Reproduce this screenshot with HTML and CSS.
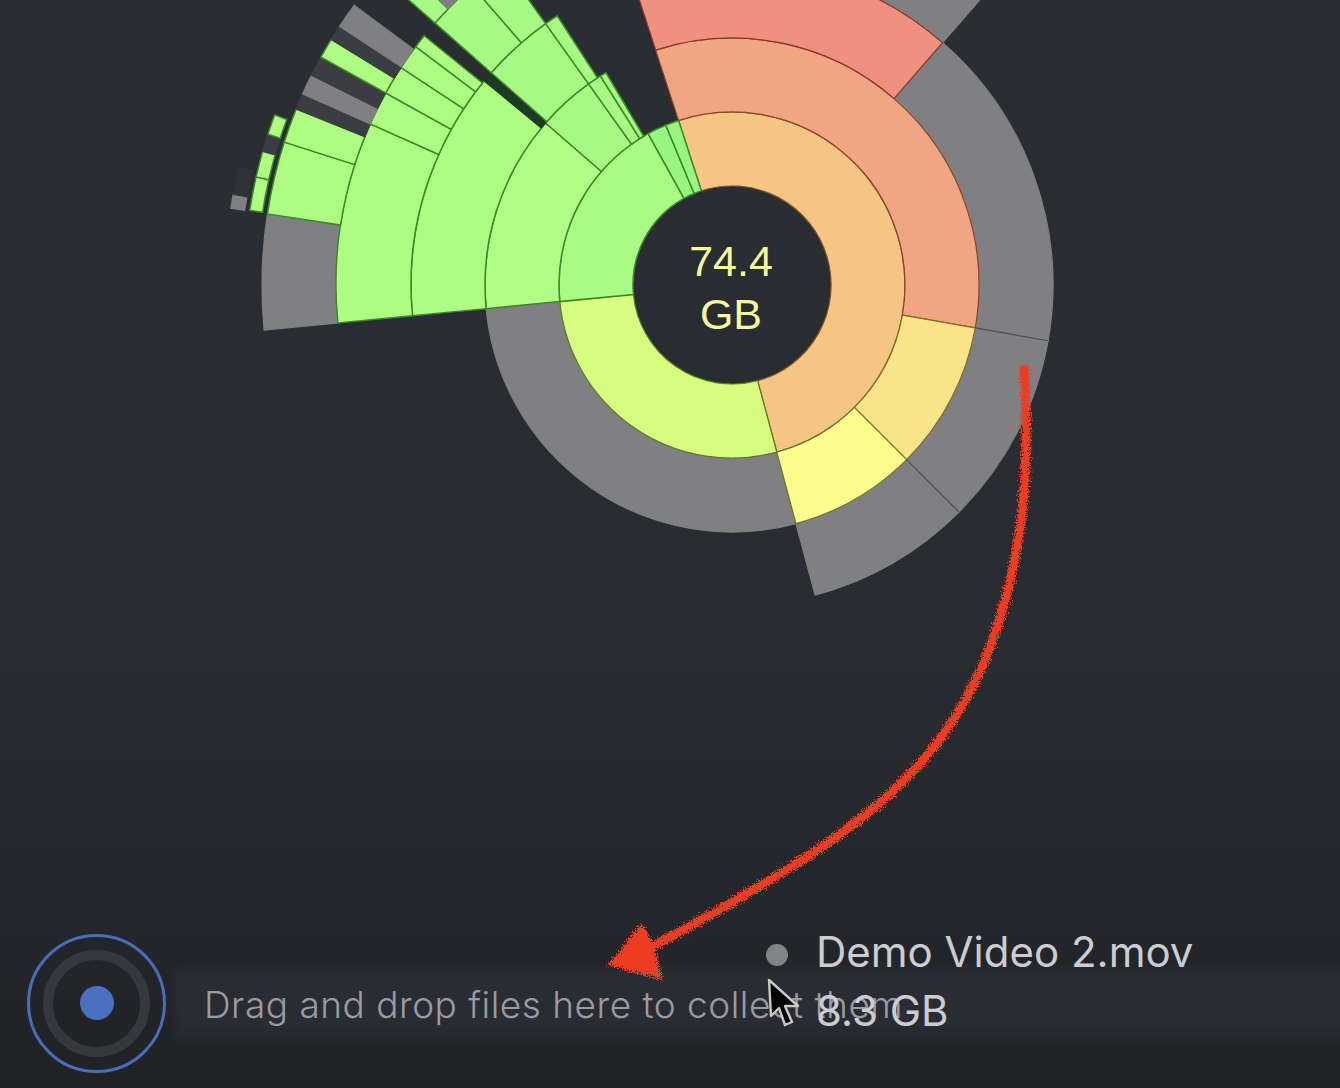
FILE: index.html
```html
<!DOCTYPE html>
<html lang="en">
<head>
<meta charset="utf-8">
<title>Disk usage sunburst</title>
<link rel="stylesheet" href="styles.css">
</head>
<body>
<main class="app">
  <section class="stage">
    <svg class="chart" id="chart" viewBox="0 0 1340 1088" width="1340" height="1088" xmlns="http://www.w3.org/2000/svg">
      <defs>
        <filter id="rough" x="-5%" y="-5%" width="110%" height="110%">
          <feTurbulence type="fractalNoise" baseFrequency="0.8" numOctaves="3" seed="4" result="n"/>
          <feDisplacementMap in="SourceGraphic" in2="n" scale="11" xChannelSelector="R" yChannelSelector="G"/>
        </filter>
      </defs>
      <g id="sectors"></g>
      <text class="total" x="731" y="276">74.4</text>
      <text class="total" x="731" y="329">GB</text>
    </svg>
  </section>

  <footer class="collector">
    <div class="dropper">
      <span class="dropper-ring"><span class="dropper-dot"></span></span>
    </div>
    <div class="dropbar">Drag and drop files here to collect them</div>
  </footer>

  <div class="ghost">
    <span class="ghost-dot"></span>
    <div class="ghost-text">
      <div class="ghost-name">Demo Video 2.mov</div>
      <div class="ghost-size">8.3 GB</div>
    </div>
  </div>

  <svg class="annotation" viewBox="0 0 1340 1088" width="1340" height="1088" xmlns="http://www.w3.org/2000/svg">
    <g filter="url(#rough)">
      <path class="arrow-shaft" d="M1024 365 C1030 470 1025 560 985 660 C935 775 860 835 650 948"/>
      <polygon class="arrow-head" points="642,923 608,965 663,980 654,946"/>
    </g>
  </svg>

  <svg class="cursor" viewBox="0 0 36 52" width="36" height="52" xmlns="http://www.w3.org/2000/svg">
    <path class="cursor-shape" d="M2 2 L4 38 L12 30 L18 47 L25 44 L18 28 L31 28 Z"/>
  </svg>
</main>
<script src="sunburst.js"></script>
</body>
</html>
```

FILE: styles.css
```css
* { box-sizing: border-box; }

html, body {
  margin: 0;
  width: 1340px;
  height: 1088px;
  overflow: hidden;
}

body {
  background: linear-gradient(180deg, #2a2d32 0%, #282b30 60%, #23262a 85%, #202226 100%);
  font-family: "Inter", "Liberation Sans", sans-serif;
}

.app {
  position: relative;
  width: 1340px;
  height: 1088px;
  display: flex;
  flex-direction: column;
  justify-content: flex-end;
}

.stage {
  position: absolute;
  inset: 0;
}

.chart { display: block; }

.annotation {
  position: absolute;
  left: 0;
  top: 0;
  pointer-events: none;
}

.total {
  fill: #f5f89c;
  font-family: "Liberation Sans", Arial, sans-serif;
  font-size: 43px;
  text-anchor: middle;
}

.arrow-shaft {
  fill: none;
  stroke: #ec3d20;
  stroke-width: 9;
}

.arrow-head { fill: #ec3d20; }

.collector {
  position: relative;
  display: flex;
  align-items: center;
  gap: 8px;
  height: 170px;
  padding: 0 0 0 27px;
}

.dropper {
  flex: none;
  width: 139px;
  height: 139px;
  border: 3px solid #4a6db8;
  border-radius: 50%;
  display: flex;
  align-items: center;
  justify-content: center;
}

.dropper-ring {
  width: 107px;
  height: 107px;
  border: 10px solid #35383d;
  border-radius: 50%;
  display: flex;
  align-items: center;
  justify-content: center;
}

.dropper-dot {
  width: 34px;
  height: 34px;
  background: #4a70c2;
  border-radius: 50%;
}

.dropbar {
  position: relative;
  z-index: 0;
  flex: 1;
  height: 72px;
  display: flex;
  align-items: center;
  padding-left: 30px;
  margin-top: 2px;
  color: #9a9ca0;
  font-size: 37px;
  letter-spacing: 0.5px;
  font-weight: 300;
  white-space: nowrap;
}

.dropbar::before {
  content: "";
  position: absolute;
  z-index: -1;
  inset: 0 -12px 0 0;
  background: linear-gradient(180deg, #2a2c33 0%, #2a2c33 70%, #272930 100%);
  filter: blur(4px);
}

.ghost {
  position: absolute;
  left: 766px;
  top: 922px;
  display: flex;
  gap: 28px;
  color: #cbcdd0;
  font-size: 42px;
  line-height: 59px;
  font-weight: 400;
}

.ghost-dot {
  flex: none;
  width: 22px;
  height: 22px;
  margin-top: 22px;
  background: #828386;
  border-radius: 50%;
}

.ghost-name,
.ghost-size { white-space: nowrap; }

.cursor {
  position: absolute;
  left: 767px;
  top: 978px;
}

.cursor-shape {
  fill: #000;
  stroke: #c9c9c9;
  stroke-width: 2.4;
  stroke-linejoin: round;
}
```

FILE: sunburst.js
```js
(function () {
  var CX = 732, CY = 285;
  var R = [99, 173, 247, 321, 396, 470];
  var GRAY = "#808083", DARK = "#3b3d42";
  var G1 = "#aafb84", G2 = "#b1fd86", G3 = "#a6fa84", G4 = "#aefd82", G5 = "#99f680";
  var GL = "#3a8a28";

  // [inner radius, outer radius, start angle, end angle, fill, stroke] (degrees clockwise from north)
  var S = [
    // gray sectors go under the coloured ones
    [R[1], R[2], 165, 264.5, GRAY, GRAY],
    [R[2], R[3], 41, 100, GRAY, GRAY],
    [R[2], R[3], 100, 135, GRAY, GRAY],
    [R[2], R[3], 135, 165, GRAY, GRAY],
    [R[3], R[4], 20, 41, GRAY, GRAY],
    [R[4], R[5], 264.5, 278.7, GRAY, GRAY],
    // ring 1
    [R[0], R[1], 342, 525, "#f4c583", "#7d4f22"],
    [R[0], R[1], 165, 264.5, "#d6fc80", "#5a7a24"],
    [R[0], R[1], 264.5, 331, G1, GL],
    [R[0], R[1], 331, 337.5, G5, GL],
    [R[0], R[1], 337.5, 342, G5, GL],
    // ring 2
    [R[1], R[2], 342, 460, "#f2a583", "#86472a"],
    [R[1], R[2], 100, 135, "#fae48a", "#7d6f24"],
    [R[1], R[2], 135, 165, "#fdfd8e", "#6d7424"],
    [R[1], R[2], 264.5, 311, G2, GL],
    [R[1], R[2], 311, 324.5, G3, GL],
    [R[1], R[2], 324.5, 327.8, G3, GL],
    [R[1], R[2], 327.8, 329.3, G3, GL],
    // ring 3
    [R[2], R[3], 342, 401, "#f0917f", "#86372a"],
    [R[2], R[3], 264.5, 309.5, G4, GL],
    [R[2], R[3], 309.5, 311, "#1d3a24", "#1d3a24"],
    [R[2], R[3], 311.4, 324.5, G3, GL],
    [R[2], R[3], 324.5, 327, G3, GL],
    // ring 4
    [R[3], R[4], 264.5, 294, G4, GL],
    [R[3], R[4], 294, 299, G4, GL],
    [R[3], R[4], 299, 303.3, G4, GL],
    [R[3], R[4], 303.3, 307, G4, GL],
    [R[3], R[4], 307, 309, G4, GL],
    [R[3], R[4], 311.4, 319, G3, GL],
    [R[3], R[4], 319, 324.5, G3, GL],
    // ring 5
    [R[4], R[5], 278.7, 287.7, G4, GL],
    [R[4], R[5], 287.7, 292, G4, GL],
    [R[4], R[5], 292, 294, DARK, DARK],
    [R[4], R[5], 294, 296.5, GRAY, GRAY],
    [R[4], R[5], 296.5, 299, DARK, DARK],
    [R[4], R[5], 299, 301.5, G4, GL],
    [R[4], R[5], 301.5, 303.4, DARK, DARK],
    [R[4], R[5], 303.4, 306.5, GRAY, GRAY],
    [R[4], R[5], 311.4, 314.2, G3, GL],
    [R[4], R[5], 314.2, 316.4, GRAY, GRAY],
    // outer slivers
    [475, 488, 278.8, 282.8, G4, GL],
    [475, 488, 282.8, 285.9, G4, GL],
    [475, 488, 285.9, 288, DARK, DARK],
    [475, 488, 288, 290.4, G4, GL],
    [493, 507, 278.7, 280.3, GRAY, GRAY],
    [493, 507, 280.3, 283.5, "#2f3237", "#2f3237"]
  ];

  // separators between gray sectors: [inner radius, outer radius, angle]
  var SEP = [
    [R[2], R[3], 100],
    [R[2], R[3], 135]
  ];

  function pt(r, a) {
    var t = a * Math.PI / 180;
    return (CX + r * Math.sin(t)).toFixed(2) + " " + (CY - r * Math.cos(t)).toFixed(2);
  }

  var NS = "http://www.w3.org/2000/svg";
  var host = document.getElementById("sectors");

  function add(d, fill, stroke, width) {
    var p = document.createElementNS(NS, "path");
    p.setAttribute("d", d);
    p.setAttribute("fill", fill);
    p.setAttribute("stroke", stroke);
    p.setAttribute("stroke-width", width);
    host.appendChild(p);
  }

  S.forEach(function (s) {
    var large = s[3] - s[2] > 180 ? 1 : 0;
    var d = "M" + pt(s[0], s[2]) +
      " A" + s[0] + " " + s[0] + " 0 " + large + " 1 " + pt(s[0], s[3]) +
      " L" + pt(s[1], s[3]) +
      " A" + s[1] + " " + s[1] + " 0 " + large + " 0 " + pt(s[1], s[2]) + " Z";
    add(d, s[4], s[5], s[5] === GL ? "1.5" : "1.2");
  });

  SEP.forEach(function (l) {
    add("M" + pt(l[0], l[2]) + " L" + pt(l[1], l[2]), "none", "#4c4e50", "1.2");
  });
})();
```
